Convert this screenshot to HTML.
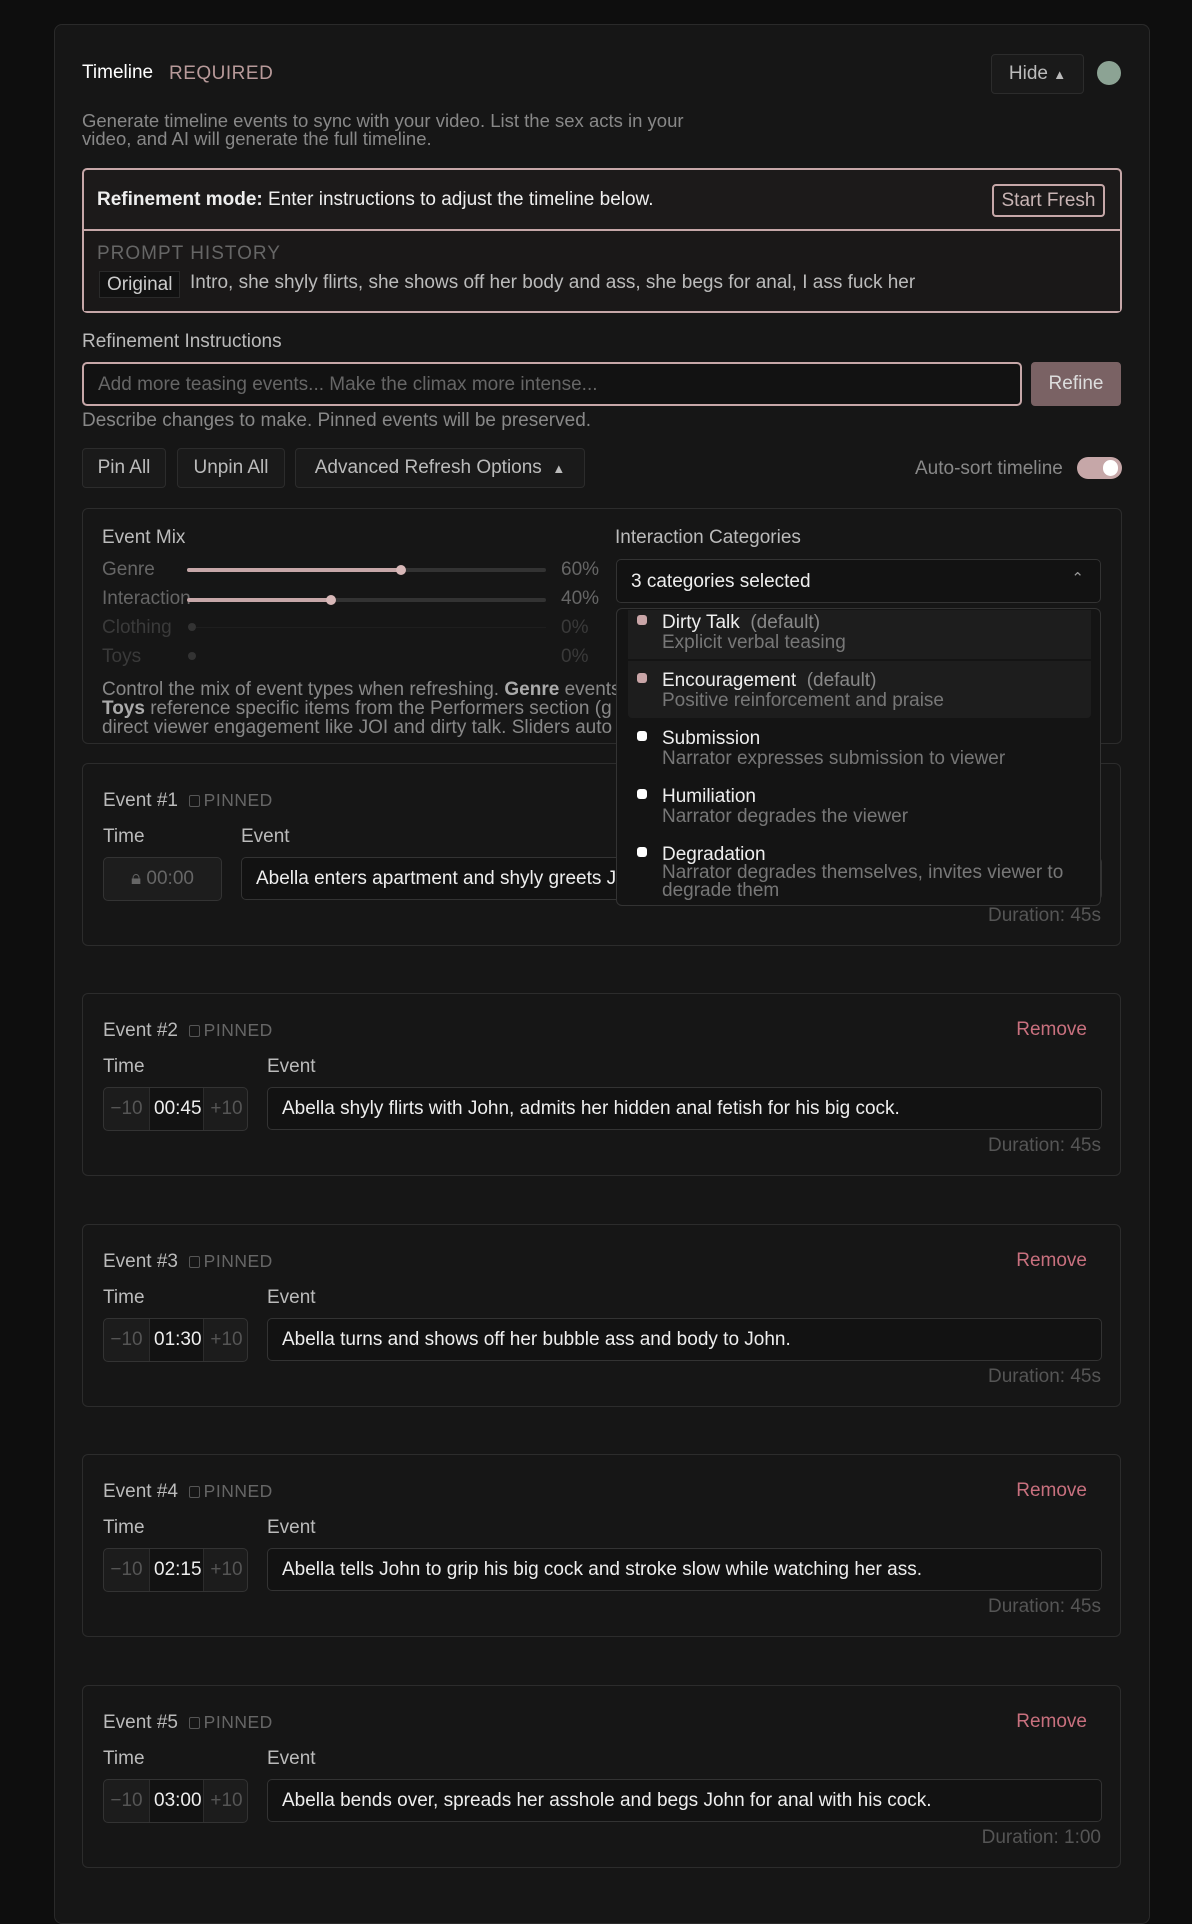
<!DOCTYPE html>
<html><head><meta charset="utf-8"><style>
*{box-sizing:border-box;margin:0;padding:0}
body{width:1192px;height:1888px;background:#0e0e0e;font-family:"Liberation Sans",sans-serif;font-size:19px;color:#ddd;position:relative;overflow:hidden}
.a{position:absolute;white-space:nowrap}
.card{position:absolute;left:54px;top:24px;width:1096px;height:1900px;background:#161616;border:1px solid #2a2a2a;border-radius:8px}
.btn{position:absolute;border:1px solid #2c2c2c;border-radius:4px;background:#1a1a1a;color:#bbb;display:flex;align-items:center;justify-content:center}
.ev{position:absolute;left:82px;width:1039px;height:183px;border:1px solid #2c2c2c;border-radius:6px;background:#161616}
.ev .t{position:absolute;color:#bbb}
.inp{position:absolute;border:1px solid #333;border-radius:5px;background:#121212;color:#eee;display:flex;align-items:center;padding-left:14px;overflow:hidden;white-space:nowrap}
.tg{position:absolute;left:20px;top:93px;width:145px;height:44px;border:1px solid #333;border-radius:5px;background:#1c1c1c;display:flex;overflow:hidden}
.tg span{display:flex;align-items:center;justify-content:center;height:100%;white-space:nowrap}
.m{width:46px;color:#555;border-right:1px solid #2c2c2c;flex:none}
.v{width:53px;color:#eee;background:#121212;overflow:hidden;justify-content:flex-start!important;padding-left:4px;flex:none}
.p{width:46px;color:#555;border-left:1px solid #2c2c2c;flex:none}
.cb{display:inline-block;width:11px;height:12px;border:1.5px solid #555;border-radius:2px;vertical-align:-1px;margin-right:4px}
.it{position:absolute;left:662px;color:#eee;white-space:nowrap}
.ds{position:absolute;left:662px;color:#777;white-space:nowrap}
.dot{position:absolute;left:637px;width:10px;height:10px;border-radius:3px;background:#fff}
.dot.on{background:#c9a5a7}
.pin{color:#666;letter-spacing:0.5px;font-size:17.5px}
</style></head><body>
<div class="card"></div>
<div class="a" style="left:82px;top:62px;color:#fff">Timeline</div>
<div class="a" style="left:169px;top:63px;color:#b89a9a;letter-spacing:0.5px">REQUIRED</div>
<div class="btn" style="left:991px;top:54px;width:93px;height:40px">Hide&nbsp;<span style="font-size:13px">▲</span></div>
<div class="a" style="left:1097px;top:61px;width:24px;height:24px;border-radius:50%;background:#8ca394"></div>
<div class="a" style="left:82px;top:112px;color:#888;font-size:18.5px;line-height:18px">Generate timeline events to sync with your video. List the sex acts in your<br>video, and AI will generate the full timeline.</div>

<div class="a" style="left:82px;top:168px;width:1040px;height:145px;border:2px solid #c6a7a8;border-radius:5px;background:#1c1a1a"></div>
<div class="a" style="left:84px;top:229px;width:1036px;height:2px;background:#c6a7a8"></div>
<div class="a" style="left:84px;top:231px;width:1036px;height:80px;background:#1a1818"></div>
<div class="a" style="left:97px;top:189px;color:#eee"><b>Refinement mode:</b> Enter instructions to adjust the timeline below.</div>
<div class="a" style="left:992px;top:184px;width:113px;height:33px;border:2px solid #c6a7a8;border-radius:4px;color:#c8b4b4;display:flex;align-items:center;justify-content:center">Start Fresh</div>
<div class="a" style="left:97px;top:243px;color:#666;letter-spacing:1px">PROMPT HISTORY</div>
<div class="a" style="left:99px;top:271px;height:27px;padding:0 7px;background:#111;border:1px solid #2a2a2a;color:#ccc;display:flex;align-items:center">Original</div>
<div class="a" style="left:190px;top:272px;color:#bbb">Intro, she shyly flirts, she shows off her body and ass, she begs for anal, I ass fuck her</div>

<div class="a" style="left:82px;top:331px;color:#bbb">Refinement Instructions</div>
<div class="a" style="left:82px;top:362px;width:940px;height:44px;border:2px solid #c6a7a8;border-radius:5px;background:#121212;color:#666;padding:10px 0 0 14px">Add more teasing events... Make the climax more intense...</div>
<div class="btn" style="left:1031px;top:362px;width:90px;height:44px;background:#7a6264;border-color:#7a6264;color:#ddd">Refine</div>
<div class="a" style="left:82px;top:410px;color:#888">Describe changes to make. Pinned events will be preserved.</div>
<div class="btn" style="left:82px;top:448px;width:84px;height:40px">Pin All</div>
<div class="btn" style="left:177px;top:448px;width:108px;height:40px">Unpin All</div>
<div class="btn" style="left:295px;top:448px;width:290px;height:40px">Advanced Refresh Options&nbsp;&nbsp;<span style="font-size:13px">▲</span></div>
<div class="a" style="left:915px;top:458px;color:#888">Auto-sort timeline</div>
<div class="a" style="left:1077px;top:457px;width:45px;height:22px;border-radius:11px;background:#c6a7a8"></div>
<div class="a" style="left:1103px;top:460px;width:15px;height:16px;border-radius:8px;background:#fff"></div>

<div class="a" style="left:82px;top:508px;width:1040px;height:236px;border:1px solid #2c2c2c;border-radius:6px"></div>
<div class="a" style="left:102px;top:527px;color:#bbb">Event Mix</div>
<div class="a" style="left:102px;top:559px;color:#666">Genre</div>
<div class="a" style="left:102px;top:588px;color:#666">Interaction</div>
<div class="a" style="left:102px;top:617px;color:#3a3a3a">Clothing</div>
<div class="a" style="left:102px;top:646px;color:#3a3a3a">Toys</div>
<div class="a" style="left:187px;top:568px;width:359px;height:4px;background:#333;border-radius:2px"></div>
<div class="a" style="left:187px;top:568px;width:214px;height:4px;background:#c6a7a8;border-radius:2px"></div>
<div class="a" style="left:396px;top:565px;width:10px;height:10px;border-radius:50%;background:#d8b8b8"></div>
<div class="a" style="left:187px;top:598px;width:359px;height:4px;background:#333;border-radius:2px"></div>
<div class="a" style="left:187px;top:598px;width:144px;height:4px;background:#c6a7a8;border-radius:2px"></div>
<div class="a" style="left:326px;top:595px;width:10px;height:10px;border-radius:50%;background:#d8b8b8"></div>
<div class="a" style="left:190px;top:627px;width:356px;height:1px;background:#1e1e1e"></div>
<div class="a" style="left:188px;top:623px;width:8px;height:8px;border-radius:50%;background:#333"></div>
<div class="a" style="left:188px;top:652px;width:8px;height:8px;border-radius:50%;background:#333"></div>
<div class="a" style="left:561px;top:559px;color:#666">60%</div>
<div class="a" style="left:561px;top:588px;color:#666">40%</div>
<div class="a" style="left:561px;top:617px;color:#3a3a3a">0%</div>
<div class="a" style="left:561px;top:646px;color:#3a3a3a">0%</div>
<div class="a" style="left:102px;top:680px;width:514px;overflow:hidden;color:#888;line-height:19px">Control the mix of event types when refreshing. <b style="color:#aaa">Genre</b> events<br><b style="color:#aaa">Toys</b> reference specific items from the Performers section (g<br>direct viewer engagement like JOI and dirty talk. Sliders auto</div>
<div class="a" style="left:615px;top:527px;color:#bbb">Interaction Categories</div>
<div class="a" style="left:616px;top:559px;width:485px;height:44px;border:1px solid #333;border-radius:5px;background:#121212;color:#eee;padding:11px 0 0 14px">3 categories selected<span style="position:absolute;right:16px;top:9px;color:#999;font-size:15px">⌃</span></div>

<!-- Event 1 -->
<div class="ev" style="top:763px">
<div class="t" style="left:20px;top:26px">Event #1 <span class="pin">&nbsp;<i class="cb"></i>PINNED</span></div>
<div class="t" style="left:20px;top:62px">Time</div>
<div class="t" style="left:158px;top:62px">Event</div>
<div class="tg" style="width:119px;background:#1d1d1d;justify-content:center;align-items:center;color:#666">🔒︎&nbsp;00:00</div>
<div class="inp" style="left:158px;top:93px;width:861px;height:43px">Abella enters apartment and shyly greets John at the door.</div>
<div class="t" style="right:19px;top:141px;color:#555">Duration: 45s</div>
</div>

<!-- Events 2-5 -->
<div class="ev" style="top:993px">
<div class="t" style="left:20px;top:26px">Event #2 <span class="pin">&nbsp;<i class="cb"></i>PINNED</span></div>
<div class="t" style="right:33px;top:25px;color:#c8707e">Remove</div>
<div class="t" style="left:20px;top:62px">Time</div><div class="t" style="left:184px;top:62px">Event</div>
<div class="tg"><span class="m">−10</span><span class="v">00:45</span><span class="p">+10</span></div>
<div class="inp" style="left:184px;top:93px;width:835px;height:43px">Abella shyly flirts with John, admits her hidden anal fetish for his big cock.</div>
<div class="t" style="right:19px;top:141px;color:#555">Duration: 45s</div>
</div>
<div class="ev" style="top:1224px">
<div class="t" style="left:20px;top:26px">Event #3 <span class="pin">&nbsp;<i class="cb"></i>PINNED</span></div>
<div class="t" style="right:33px;top:25px;color:#c8707e">Remove</div>
<div class="t" style="left:20px;top:62px">Time</div><div class="t" style="left:184px;top:62px">Event</div>
<div class="tg"><span class="m">−10</span><span class="v">01:30</span><span class="p">+10</span></div>
<div class="inp" style="left:184px;top:93px;width:835px;height:43px">Abella turns and shows off her bubble ass and body to John.</div>
<div class="t" style="right:19px;top:141px;color:#555">Duration: 45s</div>
</div>
<div class="ev" style="top:1454px">
<div class="t" style="left:20px;top:26px">Event #4 <span class="pin">&nbsp;<i class="cb"></i>PINNED</span></div>
<div class="t" style="right:33px;top:25px;color:#c8707e">Remove</div>
<div class="t" style="left:20px;top:62px">Time</div><div class="t" style="left:184px;top:62px">Event</div>
<div class="tg"><span class="m">−10</span><span class="v">02:15</span><span class="p">+10</span></div>
<div class="inp" style="left:184px;top:93px;width:835px;height:43px">Abella tells John to grip his big cock and stroke slow while watching her ass.</div>
<div class="t" style="right:19px;top:141px;color:#555">Duration: 45s</div>
</div>
<div class="ev" style="top:1685px">
<div class="t" style="left:20px;top:26px">Event #5 <span class="pin">&nbsp;<i class="cb"></i>PINNED</span></div>
<div class="t" style="right:33px;top:25px;color:#c8707e">Remove</div>
<div class="t" style="left:20px;top:62px">Time</div><div class="t" style="left:184px;top:62px">Event</div>
<div class="tg"><span class="m">−10</span><span class="v">03:00</span><span class="p">+10</span></div>
<div class="inp" style="left:184px;top:93px;width:835px;height:43px">Abella bends over, spreads her asshole and begs John for anal with his cock.</div>
<div class="t" style="right:19px;top:141px;color:#555">Duration: 1:00</div>
</div>

<!-- dropdown on top -->
<div class="a" style="left:616px;top:608px;width:485px;height:298px;border:1px solid #333;border-radius:6px;background:#141414"></div>
<div class="a" style="left:628px;top:610px;width:463px;height:49px;background:#1d1d1d"></div>
<div class="a" style="left:628px;top:661px;width:463px;height:57px;background:#1d1d1d;border-radius:0 0 4px 4px"></div>
<div class="dot on" style="top:615px"></div><div class="it" style="top:612px">Dirty Talk <span style="color:#888">&nbsp;(default)</span></div><div class="ds" style="top:632px">Explicit verbal teasing</div>
<div class="dot on" style="top:673px"></div><div class="it" style="top:670px">Encouragement <span style="color:#888">&nbsp;(default)</span></div><div class="ds" style="top:690px">Positive reinforcement and praise</div>
<div class="dot" style="top:731px"></div><div class="it" style="top:728px">Submission</div><div class="ds" style="top:748px">Narrator expresses submission to viewer</div>
<div class="dot" style="top:789px"></div><div class="it" style="top:786px">Humiliation</div><div class="ds" style="top:806px">Narrator degrades the viewer</div>
<div class="dot" style="top:847px"></div><div class="it" style="top:844px">Degradation</div><div class="ds" style="top:864px;line-height:18px">Narrator degrades themselves, invites viewer to<br>degrade them</div>
</body></html>
